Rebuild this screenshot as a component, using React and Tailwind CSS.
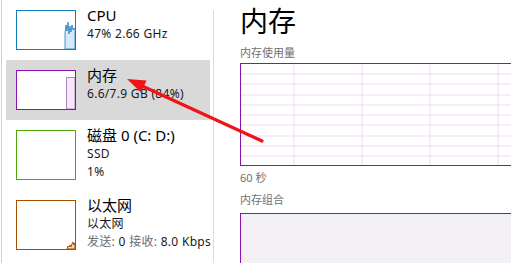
import React from "react";

const font = {
  fontFamily: '"Noto Sans", "Noto Sans CJK SC", sans-serif',
};

// sidebar thumbnails
const CpuThumb = () => (
  <div className="w-[60px] h-[40px] border border-[#117dbb] bg-white shrink-0">
    <svg width="58" height="38" viewBox="0 0 58 38">
      <polygon
        points="48,38 48,22 49,14 50,20 51,11 52,23 53,15 54,21 55,14 56,19 57,17 58,18 58,38"
        fill="#d8e9f6"
        stroke="#117dbb"
        strokeWidth="0.8"
      />
    </svg>
  </div>
);

const MemThumb = () => (
  <div className="w-[60px] h-[40px] border border-[#8b12ae] bg-white shrink-0">
    <svg width="58" height="38" viewBox="0 0 58 38">
      <polygon
        points="49.5,38 49.5,6.5 58,6.5 58,38"
        fill="#f4e8f7"
        stroke="#b77fc9"
        strokeWidth="1"
      />
    </svg>
  </div>
);

const DiskThumb = () => (
  <div className="w-[60px] h-[50px] border border-[#4da60c] bg-white shrink-0" />
);

const NetThumb = () => (
  <div className="w-[60px] h-[50px] border border-[#a74f01] bg-white shrink-0">
    <svg width="58" height="48" viewBox="0 0 58 48">
      <polygon
        points="50,48 51,45 52,46 53,44 54,46 55,43 56,41 57,44 58,42 58,48"
        fill="#f2d6b8"
        stroke="#a74f01"
        strokeWidth="1"
      />
    </svg>
  </div>
);

const SideRow = ({ thumb, title, lines, active, tall }) => (
  <div
    className={`flex pl-[10px] pt-[10px] ${tall ? "h-[70px]" : "h-[60px]"} ${
      active ? "bg-[#d9d9d9]" : ""
    }`}
  >
    {thumb}
    <div className="ml-[11px] -mt-[5px]">
      <div className="text-[15px] leading-[20px] text-black whitespace-nowrap">
        {title}
      </div>
      {lines.map((l, i) => (
        <div
          key={i}
          className="text-[12px] leading-[18px] tracking-[0.3px] text-[#1a1a1a] whitespace-nowrap"
        >
          {l}
        </div>
      ))}
    </div>
  </div>
);

const GridChart = () => {
  const vx = [53, 121, 189, 257];
  const hy = [10, 20, 31, 41, 51, 61, 72, 82, 92];
  return (
    <div className="w-[300px] h-[103px] border border-[#8b12ae] bg-white">
      <svg width="298" height="101" viewBox="0 0 298 101">
        {vx.map((x) => (
          <line key={x} x1={x} y1="0" x2={x} y2="101" stroke="#eed8f2" strokeWidth="1" />
        ))}
        {hy.map((y) => (
          <line key={y} x1="0" y1={y} x2="298" y2={y} stroke="#eed8f2" strokeWidth="1" />
        ))}
      </svg>
    </div>
  );
};

export default function App() {
  return (
    <div
      className="relative w-[511px] h-[263px] overflow-hidden bg-white flex"
      style={font}
    >
      {/* left edge line */}
      <div className="w-[6px] shrink-0 flex">
        <div className="ml-[1px] w-[1px] bg-[#cfcfcf]" />
      </div>

      {/* Sidebar */}
      <div className="w-[204px] shrink-0 flex flex-col">
        <SideRow thumb={<CpuThumb />} title="CPU" lines={["47% 2.66 GHz"]} />
        <SideRow
          thumb={<MemThumb />}
          title="内存"
          lines={["6.6/7.9 GB (84%)"]}
          active
        />
        <SideRow
          thumb={<DiskThumb />}
          title="磁盘 0 (C: D:)"
          lines={["SSD", "1%"]}
          tall
        />
        <SideRow
          thumb={<NetThumb />}
          title="以太网"
          lines={[
            "以太网",
            <span key="s">
              <span className="text-[#6d6d6d]">发送:</span> 0{" "}
              <span className="text-[#6d6d6d]">接收:</span> 8.0 Kbps
            </span>,
          ]}
          tall
        />
      </div>

      {/* divider */}
      <div className="w-[3px] shrink-0" />
      <div className="mt-[10px] w-[1px] shrink-0 bg-[#dcdcdc]" />

      {/* Main panel */}
      <div className="flex-1 pl-[26px] overflow-hidden">
        <div className="text-[28px] leading-[36px] text-black mt-[3px] whitespace-nowrap">
          内存
        </div>
        <div className="text-[11px] leading-[16px] text-[#707070] mt-[6px]">
          内存使用量
        </div>
        <div className="mt-[2px]">
          <GridChart />
        </div>
        <div className="text-[11px] leading-[16px] text-[#707070] mt-[4px]">
          60 秒
        </div>
        <div className="text-[11px] leading-[16px] text-[#707070] mt-[6px]">
          内存组合
        </div>
        <div className="mt-[5px] w-[300px] h-[60px] border border-[#8b12ae] bg-[#f2f0f4]" />
      </div>

      {/* red annotation arrow */}
      <svg
        className="absolute left-0 top-0 pointer-events-none"
        width="511"
        height="263"
        viewBox="0 0 511 263"
      >
        <line
          x1="262"
          y1="141"
          x2="140"
          y2="85"
          stroke="#f01414"
          strokeWidth="3.2"
          strokeLinecap="round"
        />
        <polygon points="127,79 146.5,80.5 141,92.5" fill="#f01414" />
      </svg>
    </div>
  );
}
